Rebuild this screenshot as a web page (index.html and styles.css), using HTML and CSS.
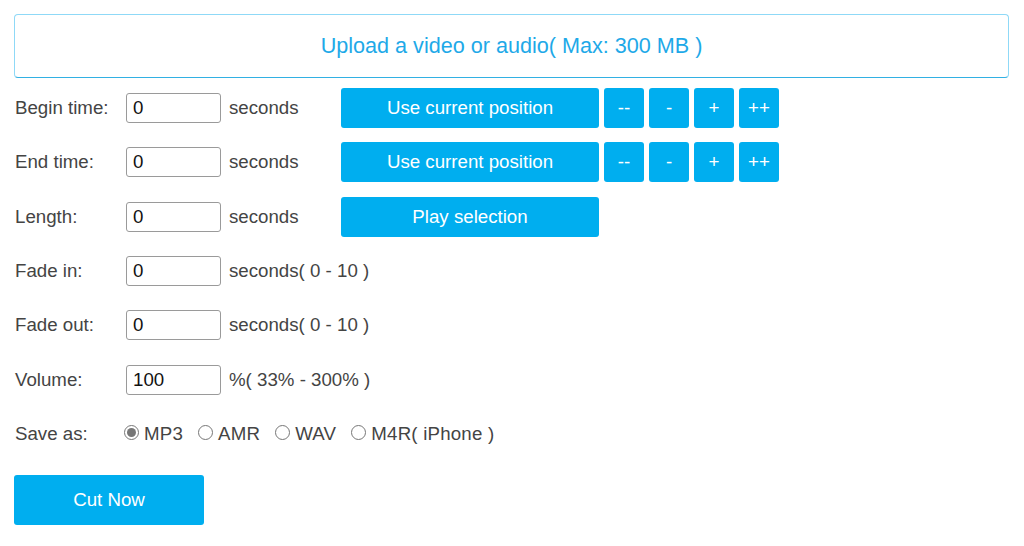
FILE: index.html
```html
<!DOCTYPE html>
<html>
<head>
<meta charset="utf-8">
<link rel="stylesheet" href="styles.css">
</head>
<body>
<div class="upload">Upload a video or audio( Max: 300 MB )</div>
<div class="form">
  <div class="row">
    <span class="label">Begin time:</span>
    <input class="field" type="text" value="0">
    <span class="unit">seconds</span>
    <div class="btns">
      <button class="btn wide">Use current position</button>
      <button class="btn sq">--</button>
      <button class="btn sq">-</button>
      <button class="btn sq">+</button>
      <button class="btn sq">++</button>
    </div>
  </div>
  <div class="row">
    <span class="label">End time:</span>
    <input class="field" type="text" value="0">
    <span class="unit">seconds</span>
    <div class="btns">
      <button class="btn wide">Use current position</button>
      <button class="btn sq">--</button>
      <button class="btn sq">-</button>
      <button class="btn sq">+</button>
      <button class="btn sq">++</button>
    </div>
  </div>
  <div class="row">
    <span class="label">Length:</span>
    <input class="field" type="text" value="0">
    <span class="unit">seconds</span>
    <div class="btns">
      <button class="btn wide">Play selection</button>
    </div>
  </div>
  <div class="row">
    <span class="label">Fade in:</span>
    <input class="field" type="text" value="0">
    <span class="unit">seconds( 0 - 10 )</span>
  </div>
  <div class="row">
    <span class="label">Fade out:</span>
    <input class="field" type="text" value="0">
    <span class="unit">seconds( 0 - 10 )</span>
  </div>
  <div class="row">
    <span class="label">Volume:</span>
    <input class="field" type="text" value="100">
    <span class="unit">%( 33% - 300% )</span>
  </div>
  <div class="row">
    <span class="label">Save as:</span>
    <div class="radios">
      <label class="opt"><input type="radio" name="fmt" checked>MP3</label>
      <label class="opt"><input type="radio" name="fmt">AMR</label>
      <label class="opt"><input type="radio" name="fmt">WAV</label>
      <label class="opt"><input type="radio" name="fmt">M4R( iPhone )</label>
    </div>
  </div>
</div>
<button class="btn cut">Cut Now</button>
</body>
</html>
```
FILE: styles.css
```css
html, body {
  background: #fff;
}
body {
  margin: 14px 15px 0 14px;
  font-family: "Liberation Sans", Arial, sans-serif;
  font-size: 18.7px;
  color: #444;
}
.upload {
  height: 62px;
  border: 1px solid #8fd9f7;
  border-bottom-color: #32b0e3;
  border-radius: 4px;
  display: flex;
  align-items: center;
  justify-content: center;
  color: #1ea9e8;
  font-size: 21.6px;
}
.form {
  margin-top: 10px;
  display: flex;
  flex-direction: column;
  gap: 14.35px;
}
.row {
  display: flex;
  align-items: center;
  height: 40px;
}
.label {
  width: 112px;
  flex: none;
  padding-left: 1px;
  box-sizing: border-box;
}
.field {
  width: 95px;
  height: 30px;
  box-sizing: border-box;
  border: 1px solid #9a9a9a;
  border-radius: 3px;
  padding: 0 6px;
  font-family: "Liberation Sans", Arial, sans-serif;
  font-size: 18.7px;
  color: #111;
  flex: none;
  margin: 0;
}
.unit {
  width: 120px;
  flex: none;
  padding-left: 8px;
  box-sizing: border-box;
  white-space: nowrap;
}
.btns {
  display: flex;
  gap: 5px;
}
.btn {
  background: #00aeef;
  color: #fff;
  border: none;
  border-radius: 3px;
  font-family: "Liberation Sans", Arial, sans-serif;
  font-size: 18.7px;
  height: 40px;
  padding: 0;
  margin: 0;
  cursor: pointer;
}
.wide {
  width: 258px;
}
.sq {
  width: 40px;
}
.radios {
  display: flex;
  align-items: center;
  gap: 15px;
  margin-left: -2px;
}
.opt {
  display: flex;
  align-items: center;
  letter-spacing: 0.2px;
}
.opt input {
  width: 15px;
  height: 15px;
  margin: -4px 5px 0 0;
  accent-color: #777;
}
.cut {
  display: block;
  margin-top: 21px;
  width: 190px;
  height: 50px;
}
```
